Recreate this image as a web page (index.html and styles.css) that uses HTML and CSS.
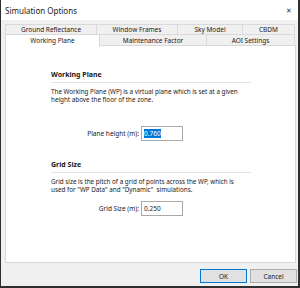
FILE: index.html
```html
<!DOCTYPE html>
<html lang="en">
<head>
    <meta charset="UTF-8">
    <title>Simulation Options</title>
    <link rel="stylesheet" href="styles.css">
</head>
<body>
    <div class="window">
        <div class="titlebar">
            <span class="title">Simulation Options</span>
            <span class="close">✕</span>
        </div>
        <div class="content">
            <div class="tab-row back-row">
                <div class="tab" style="width: 92px">Ground Reflectance</div>
                <div class="tab" style="width: 81px">Window Frames</div>
                <div class="tab" style="width: 65px">Sky Model</div>
                <div class="tab" style="width: 52px">CBDM</div>
            </div>
            <div class="tab-row front-row">
                <div class="tab selected" style="width: 95px">Working Plane</div>
                <div class="tab" style="width: 107px">Maintenance Factor</div>
                <div class="tab" style="width: 88px">AOI Settings</div>
            </div>
            <div class="panel">
                <div class="section">
                    <div class="heading">Working Plane</div>
                    <p class="text">The Working Plane (WP) is a virtual plane which is set at a given height above the floor of the zone.</p>
                    <div class="field first-field">
                        <label class="field-label">Plane height (m):</label>
                        <div class="field-box"><span class="selected-text">0.760</span></div>
                    </div>
                </div>
                <div class="section">
                    <div class="heading">Grid Size</div>
                    <p class="text">Grid size is the pitch of a grid of points across the WP, which is used for "WP Data" and "Dynamic"&nbsp; simulations.</p>
                    <div class="field">
                        <label class="field-label">Grid Size (m):</label>
                        <div class="field-box">0.250</div>
                    </div>
                </div>
            </div>
            <div class="footer">
                <button class="button default-button">OK</button>
                <button class="button">Cancel</button>
            </div>
        </div>
    </div>
</body>
</html>
```

FILE: styles.css
```css
body {
    margin: 0;
    background-color: #2f2f2f;
    font-family: "Noto Sans", "Open Sans", sans-serif;
    color: #1a1a1a;
}
.window {
    width: 297px;
    height: 286px;
    margin-left: 1px;
    background-color: #f0f0f0;
    display: flex;
    flex-direction: column;
}
.titlebar {
    height: 20px;
    background-color: #fff;
    display: flex;
    justify-content: space-between;
    align-items: center;
    padding: 0 6px 0 4px;
    font-size: 8px;
}
.close {
    font-size: 7px;
    color: #333;
}
.content {
    flex: 1;
    padding: 4px 0 0 4px;
    display: flex;
    flex-direction: column;
}
.tab-row {
    display: flex;
    width: 290px;
}
.back-row {
    height: 10px;
}
.front-row {
    height: 11px;
    position: relative;
    z-index: 1;
}
.tab {
    box-sizing: border-box;
    border: 1px solid #d9d9d9;
    border-left: none;
    border-bottom: none;
    background-color: #f0f0f0;
    font-size: 6.5px;
    display: flex;
    justify-content: center;
    align-items: center;
}
.tab:first-child {
    border-left: 1px solid #d9d9d9;
}
.tab.selected {
    background-color: #fff;
    height: 13px;
    align-items: flex-start;
    padding-top: 1px;
}
.panel {
    box-sizing: border-box;
    width: 291px;
    height: 218px;
    background-color: #fff;
    border: 1px solid #d9d9d9;
    padding: 24px 0 0 45px;
}
.section {
    width: 200px;
    margin-bottom: 19px;
}
.heading {
    font-size: 7px;
    line-height: 10px;
    font-weight: bold;
    padding-bottom: 2px;
    border-bottom: 1px solid #e3e3e3;
    margin-bottom: 5px;
}
.text {
    margin: 0;
    width: 192px;
    font-size: 6.3px;
    line-height: 8px;
}
.field {
    display: flex;
    align-items: center;
    margin-top: 7px;
}
.first-field {
    margin-top: 22px;
}
.field-label {
    width: 88px;
    text-align: right;
    font-size: 6.5px;
    padding-right: 2px;
}
.field-box {
    box-sizing: border-box;
    width: 42px;
    height: 15px;
    border: 1px solid #a9a9a9;
    font-size: 6.5px;
    padding: 0 2px;
    display: flex;
    align-items: center;
}
.selected-text {
    background-color: #0078d7;
    color: #fff;
}
.footer {
    display: flex;
    justify-content: flex-end;
    gap: 3px;
    padding: 6px 1px 0 0;
}
.button {
    box-sizing: border-box;
    width: 47px;
    height: 14px;
    border: 1px solid #adadad;
    background-color: #e1e1e1;
    font-family: "Noto Sans", "Open Sans", sans-serif;
    font-size: 6.5px;
    padding: 0;
    color: #1a1a1a;
}
.default-button {
    border-color: #0078d7;
}
```
